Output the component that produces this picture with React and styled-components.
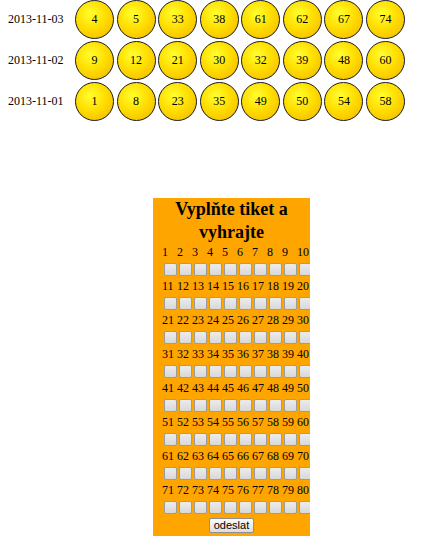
import React from 'react';
import styled, { createGlobalStyle } from 'styled-components';

const GlobalStyle = createGlobalStyle`
    body {
        margin: 0 8px;
        font-family: "Liberation Serif", "Times New Roman", serif;
        font-size: 12px;
        color: #000;
        background: #fff;
    }
`;

const Draws = styled.div`
    display: flex;
    flex-direction: column;
    gap: 2px;
`;

const DrawRow = styled.div`
    display: flex;
    align-items: center;
`;

const DrawDate = styled.div`
    width: 67px;
    flex-shrink: 0;
`;

const Balls = styled.div`
    display: flex;
    gap: 2.57px;
`;

const Ball = styled.div`
    width: 39px;
    height: 39px;
    box-sizing: border-box;
    border: 1px solid #1a1a1a;
    border-radius: 50%;
    background: radial-gradient(circle at 40% 35%, #ffff30 0%, #ffde00 45%, #f2b300 100%);
    display: flex;
    align-items: center;
    justify-content: center;
    font-size: 12px;
`;

const Ticket = styled.form`
    width: 157px;
    margin: 77px 0 0 145px;
    background: #ffa500;
    overflow: hidden;
    padding-bottom: 3px;
`;

const Title = styled.h2`
    margin: 0;
    font-size: 18px;
    font-weight: bold;
    line-height: 22.6px;
    text-align: center;
`;

const Grid = styled.div`
    display: grid;
    grid-template-columns: repeat(10, 15px);
    padding-left: 9px;
    width: 150px;
`;

const Num = styled.span`
    height: 18px;
    line-height: 18px;
    white-space: nowrap;
`;

const Box = styled.input.attrs({ type: 'checkbox' })`
    appearance: none;
    width: 13px;
    height: 13px;
    box-sizing: border-box;
    margin: 2px 0 1px 2px;
    border: 1px solid #9c9c9c;
    border-radius: 2px;
    background: linear-gradient(#ececec, #d8d8d8);
    display: block;

    &:checked {
        background: linear-gradient(#cfe3ff, #9fc3f0);
    }
`;

const Footer = styled.div`
    display: flex;
    justify-content: center;
    padding-top: 3px;
`;

const Submit = styled.button`
    height: 15px;
    padding: 0 4px;
    font-family: "Liberation Sans", Arial, sans-serif;
    font-size: 11px;
    line-height: 13px;
    color: #000;
    border: 1px solid #8f8f8f;
    border-radius: 2px;
    background: linear-gradient(#fbfbfb, #dedede);
    cursor: pointer;
`;

const draws = [
    { date: '2013-11-03', numbers: [4, 5, 33, 38, 61, 62, 67, 74] },
    { date: '2013-11-02', numbers: [9, 12, 21, 30, 32, 39, 48, 60] },
    { date: '2013-11-01', numbers: [1, 8, 23, 35, 49, 50, 54, 58] },
];

const rows = Array.from({ length: 8 }, (_, r) =>
    Array.from({ length: 10 }, (_, c) => r * 10 + c + 1)
);

function App() {
    return (
        <>
            <GlobalStyle />
            <Draws>
                {draws.map((d) => (
                    <DrawRow key={d.date}>
                        <DrawDate>{d.date}</DrawDate>
                        <Balls>
                            {d.numbers.map((n) => (
                                <Ball key={n}>{n}</Ball>
                            ))}
                        </Balls>
                    </DrawRow>
                ))}
            </Draws>
            <Ticket onSubmit={(e) => e.preventDefault()}>
                <Title>Vyplňte tiket a vyhrajte</Title>
                <Grid>
                    {rows.map((row) => (
                        <React.Fragment key={row[0]}>
                            {row.map((n) => (
                                <Num key={'n' + n}>{n}</Num>
                            ))}
                            {row.map((n) => (
                                <Box key={'c' + n} name={'n' + n} />
                            ))}
                        </React.Fragment>
                    ))}
                </Grid>
                <Footer>
                    <Submit type="submit">odeslat</Submit>
                </Footer>
            </Ticket>
        </>
    );
}

export default App;
